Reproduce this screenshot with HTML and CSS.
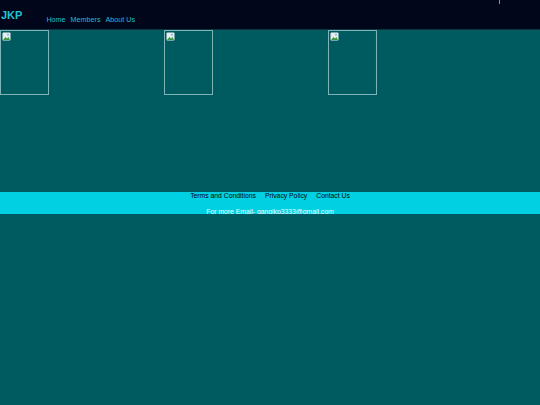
FILE: index.html
```html
<!DOCTYPE html>
<html>
<head>
<meta charset="utf-8">
<link rel="stylesheet" href="styles.css">
</head>
<body>
<header class="top">
  <div class="brand">JKP</div>
  <nav class="nav">
    <a href="#">Home</a>
    <a href="#">Members</a>
    <a href="#">About Us</a>
  </nav>
  <span class="tick"></span>
</header>
<main class="gallery">
  <div class="col"><div class="pic"><svg class="broken" width="9" height="9" viewBox="0 0 9 9"><rect x="0.5" y="0.5" width="8" height="8" rx="1" fill="#e8eef0"/><path d="M1 8 L3.5 5 L5 6.5 L6.5 5 L8 8 Z" fill="#3d9a3d"/><circle cx="6" cy="2.8" r="1" fill="#7ab8e0"/></svg></div></div>
  <div class="col"><div class="pic"><svg class="broken" width="9" height="9" viewBox="0 0 9 9"><rect x="0.5" y="0.5" width="8" height="8" rx="1" fill="#e8eef0"/><path d="M1 8 L3.5 5 L5 6.5 L6.5 5 L8 8 Z" fill="#3d9a3d"/><circle cx="6" cy="2.8" r="1" fill="#7ab8e0"/></svg></div></div>
  <div class="col"><div class="pic"><svg class="broken" width="9" height="9" viewBox="0 0 9 9"><rect x="0.5" y="0.5" width="8" height="8" rx="1" fill="#e8eef0"/><path d="M1 8 L3.5 5 L5 6.5 L6.5 5 L8 8 Z" fill="#3d9a3d"/><circle cx="6" cy="2.8" r="1" fill="#7ab8e0"/></svg></div></div>
</main>
<footer class="foot">
  <div class="links">
    <a href="#">Terms and Conditions</a>
    <a href="#">Privacy Policy</a>
    <a href="#">Contact Us</a>
  </div>
  <div class="mail">For more Email- gangjkp3333@gmail.com</div>
</footer>
</body>
</html>
```
FILE: styles.css
```css
html, body {
  margin: 0;
  padding: 0;
  background: #005b60;
  font-family: "Liberation Sans", Arial, sans-serif;
}
.top {
  position: relative;
  height: 29px;
  background: #02061a;
  border-bottom: 1px solid #0b3640;
  display: flex;
  align-items: flex-start;
}
.brand {
  color: #1fc3d6;
  font-weight: bold;
  font-size: 11px;
  line-height: 11px;
  margin: 10px 0 0 1px;
}
.nav {
  display: flex;
  gap: 5px;
  margin: 15px 0 0 24px;
}
.nav a {
  color: #1ebfd0;
  text-decoration: none;
  font-size: 7.2px;
  line-height: 9px;
}
.tick {
  position: absolute;
  left: 499px;
  top: 0;
  width: 1px;
  height: 4px;
  background: #8a90a8;
}
.gallery {
  display: flex;
  height: 162px;
  align-items: flex-start;
}
.col {
  width: 164px;
}
.pic {
  width: 47px;
  height: 63px;
  border: 1px solid #7fb3b6;
  position: relative;
}
.broken {
  display: block;
  margin: 1px 0 0 1px;
}
.foot {
  background: #00d0e2;
  height: 22px;
  text-align: center;
  font-size: 6.8px;
}
.links {
  display: flex;
  justify-content: center;
  gap: 9px;
  line-height: 8px;
  padding-top: 0;
}
.links a {
  color: #000000;
  text-decoration: none;
}
.mail {
  color: #f0fcff;
  line-height: 9px;
  margin-top: 7px;
}
```
